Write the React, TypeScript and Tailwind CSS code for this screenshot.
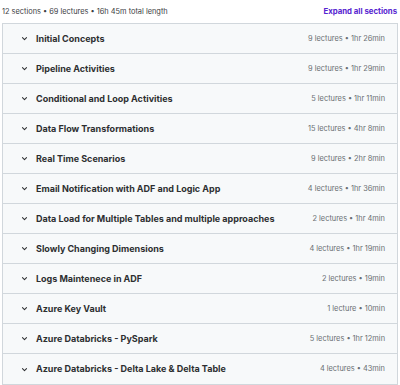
import React from "react";

const sections = [
  { title: "Initial Concepts", meta: "9 lectures • 1hr 26min" },
  { title: "Pipeline Activities", meta: "9 lectures • 1hr 29min" },
  { title: "Conditional and Loop Activities", meta: "5 lectures • 1hr 11min" },
  { title: "Data Flow Transformations", meta: "15 lectures • 4hr 8min" },
  { title: "Real Time Scenarios", meta: "9 lectures • 2hr 8min" },
  { title: "Email Notification with ADF and Logic App", meta: "4 lectures • 1hr 36min" },
  { title: "Data Load for Multiple Tables and multiple approaches", meta: "2 lectures • 1hr 4min" },
  { title: "Slowly Changing Dimensions", meta: "4 lectures • 1hr 19min" },
  { title: "Logs Maintenece in ADF", meta: "2 lectures • 19min" },
  { title: "Azure Key Vault", meta: "1 lecture • 10min" },
  { title: "Azure Databricks - PySpark", meta: "5 lectures • 1hr 12min" },
  { title: "Azure Databricks - Delta Lake & Delta Table", meta: "4 lectures • 43min" },
];

function Chevron() {
  return (
    <svg width="7" height="7" viewBox="0 0 24 24" fill="none" stroke="#2d2f31" strokeWidth="3.5" strokeLinecap="round" strokeLinejoin="round">
      <path d="M5 9l7 7 7-7" />
    </svg>
  );
}

export default function App() {
  return (
    <div className="w-[400px] h-[385px] overflow-hidden bg-white px-[2px] font-['Inter',sans-serif] text-[#2d2f31]">
      {/* Summary line */}
      <div className="h-[23px] flex items-center justify-between">
        <span className="text-[7.4px] text-[#3d4043]">12 sections • 69 lectures • 16h 45m total length</span>
        <button className="text-[7.8px] font-bold text-[#5624d0] pr-[1px]">Expand all sections</button>
      </div>

      {/* Curriculum list */}
      <div className="border border-[#d1d7dc]">
        {sections.map((s, i) => (
          <div
            key={s.title}
            className={"h-[30px] flex items-center justify-between bg-[#f7f9fa] pl-[18px] pr-[12px] " + (i < sections.length - 1 ? "border-b border-[#d1d7dc]" : "")}
          >
            <div className="flex items-center gap-[8px]">
              <Chevron />
              <span className="text-[9px] font-bold">{s.title}</span>
            </div>
            <span className="text-[7.4px] text-[#6a6f73]">{s.meta}</span>
          </div>
        ))}
      </div>
    </div>
  );
}
